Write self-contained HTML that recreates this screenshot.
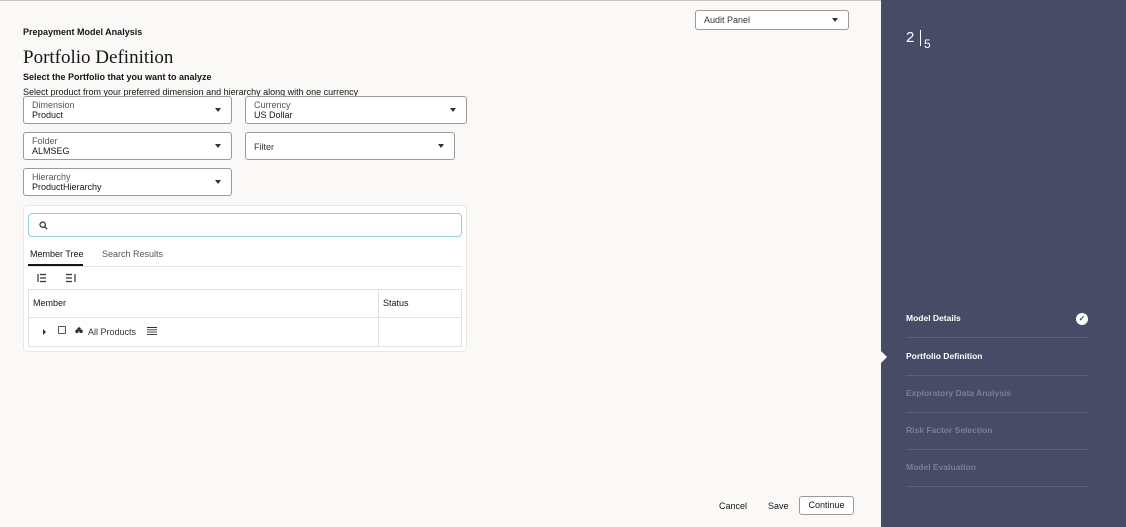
<!DOCTYPE html>
<html><head><style>
*{margin:0;padding:0;box-sizing:border-box}
body{width:1126px;height:527px;background:#faf9f8;font-family:"Liberation Sans",sans-serif;color:#161513;position:relative;overflow:hidden}
.a{position:absolute}
.sel{position:absolute;border:1px solid #9e9a95;border-radius:3px;background:#fff;height:28px}
.sel .l{position:absolute;left:8px;top:3px;font-size:9px;color:#555}
.sel .v{position:absolute;left:8px;top:13px;font-size:9px;color:#161513}
.sel .c{position:absolute;right:10px;top:11px;width:0;height:0;border-left:3.5px solid transparent;border-right:3.5px solid transparent;border-top:4px solid #333}
.side{position:absolute;left:881px;top:0;width:245px;height:527px;background:#474b66}
.step{position:absolute;left:25px;width:182px;font-size:8.5px;font-weight:bold;border-bottom:1px solid #5b5f78;height:37px;padding-top:12px}
</style></head><body>
<div class="a" style="left:0;top:0;width:1126px;height:1px;background:#c9c4bb"></div>
<div class="a" style="left:23px;top:27px;font-size:9px;font-weight:bold">Prepayment Model Analysis</div>
<div class="a" style="left:23px;top:47px;font-size:19px;font-family:'Liberation Serif',serif">Portfolio Definition</div>
<div class="a" style="left:23px;top:72px;font-size:9px;font-weight:bold">Select the Portfolio that you want to analyze</div>
<div class="a" style="left:23px;top:87px;font-size:9px">Select product from your preferred dimension and hierarchy along with one currency</div>
<div class="sel" style="left:23px;top:96px;width:209px"><span class="l">Dimension</span><span class="v">Product</span><span class="c"></span></div>
<div class="sel" style="left:245px;top:96px;width:222px"><span class="l">Currency</span><span class="v">US Dollar</span><span class="c"></span></div>
<div class="sel" style="left:23px;top:132px;width:209px"><span class="l">Folder</span><span class="v">ALMSEG</span><span class="c"></span></div>
<div class="sel" style="left:245px;top:132px;width:210px"><span class="l" style="top:9px;font-size:9px;color:#333">Filter</span><span class="c"></span></div>
<div class="sel" style="left:23px;top:168px;width:209px"><span class="l">Hierarchy</span><span class="v">ProductHierarchy</span><span class="c"></span></div>
<div class="sel" style="left:695px;top:10px;width:154px;height:20px"><span class="l" style="top:4px;color:#333">Audit Panel</span><span class="c" style="top:7px"></span></div>

<div class="a" style="left:23px;top:205px;width:444px;height:147px;background:#fff;border:1px solid #ebe8e4;border-radius:4px"></div>
<div class="a" style="left:28px;top:213px;width:434px;height:24px;border:1px solid #8fd3d6;border-radius:4px;background:#fff">
<svg class="a" style="left:10px;top:7px" width="9" height="9" viewBox="0 0 9 9"><circle cx="3.7" cy="3.7" r="2.7" fill="none" stroke="#333" stroke-width="1.2"/><path d="M5.7 5.7L8 8" stroke="#333" stroke-width="1.3"/></svg></div>
<div class="a" style="left:30px;top:249px;font-size:9px;color:#161513">Member Tree</div>
<div class="a" style="left:28px;top:264px;width:55px;height:2px;background:#161513"></div>
<div class="a" style="left:102px;top:249px;font-size:9px;color:#555">Search Results</div>
<div class="a" style="left:28px;top:266px;width:434px;height:1px;background:#e5e2de"></div>
<svg class="a" style="left:37px;top:273px" width="10" height="10" viewBox="0 0 10 10" stroke="#333" stroke-width="1.2"><path d="M1 1v8M3 1.5h6M3 5h6M3 8.5h6"/></svg>
<svg class="a" style="left:66px;top:273px" width="10" height="10" viewBox="0 0 10 10" stroke="#333" stroke-width="1.2"><path d="M9 1v8M0 1.5h6M0 5h6M0 8.5h6"/></svg>
<div class="a" style="left:28px;top:289px;width:434px;height:58px;border:1px solid #e5e2de"></div>
<div class="a" style="left:28px;top:317px;width:434px;height:1px;background:#e5e2de"></div>
<div class="a" style="left:378px;top:289px;width:1px;height:58px;background:#e5e2de"></div>
<div class="a" style="left:33px;top:298px;font-size:9px">Member</div>
<div class="a" style="left:383px;top:298px;font-size:9px">Status</div>
<div class="a" style="left:43px;top:329px;width:0;height:0;border-top:3px solid transparent;border-bottom:3px solid transparent;border-left:3px solid #333"></div>
<div class="a" style="left:58px;top:326px;width:8px;height:8px;border:1px solid #555;border-radius:1px"></div>
<svg class="a" style="left:75px;top:327px" width="8" height="7" viewBox="0 0 8 7" fill="#333"><circle cx="4" cy="2" r="1.8"/><circle cx="2" cy="4.3" r="1.8"/><circle cx="6" cy="4.3" r="1.8"/></svg>
<div class="a" style="left:88px;top:327px;font-size:9px;color:#333">All Products</div>
<svg class="a" style="left:147px;top:327px" width="10" height="8" viewBox="0 0 10 8" stroke="#333" stroke-width="0.9"><path d="M0 0.5h10M0 2.8h10M0 5.1h10M0 7.4h10"/></svg>

<div class="a" style="left:719px;top:501px;font-size:9px">Cancel</div>
<div class="a" style="left:768px;top:501px;font-size:9px">Save</div>
<div class="a" style="left:799px;top:496px;width:55px;height:19px;border:1px solid #9e9a95;border-radius:3px;background:#fff;font-size:9px;text-align:center;line-height:17px">Continue</div>

<div class="side">
<div class="a" style="left:25px;top:29px;color:#fff;font-size:15px">2</div>
<div class="a" style="left:39px;top:30px;width:1px;height:16px;background:#fff"></div>
<div class="a" style="left:43px;top:37px;color:#fff;font-size:12px">5</div>
<div class="a" style="left:0;top:351px;width:0;height:0;border-top:6px solid transparent;border-bottom:6px solid transparent;border-left:6px solid #fff"></div>
<div class="step" style="top:301px;color:#fff">Model Details<span class="a" style="right:0;top:12px;width:12px;height:12px;border-radius:50%;background:#fff;color:#474b66;font-size:8px;text-align:center;line-height:12px">✓</span></div>
<div class="step" style="top:339px;color:#fff">Portfolio Definition</div>
<div class="step" style="top:376px;color:#7a7e95">Exploratory Data Analysis</div>
<div class="step" style="top:413px;color:#7a7e95">Risk Factor Selection</div>
<div class="step" style="top:450px;color:#7a7e95">Model Evaluation</div>
</div>
</body></html>
